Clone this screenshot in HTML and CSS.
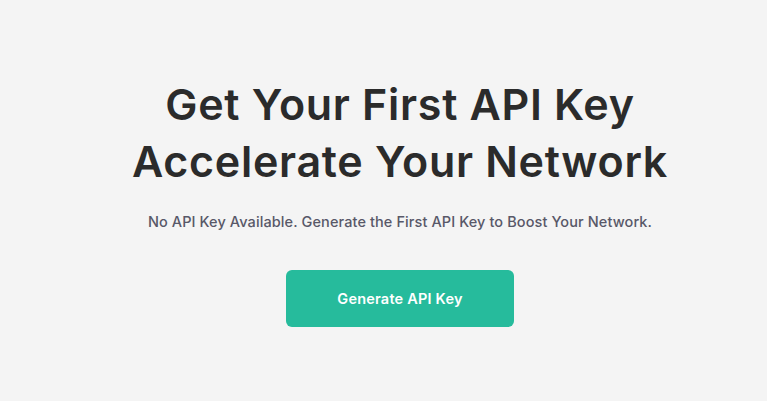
FILE: index.html
```html
<!DOCTYPE html>
<html lang="en">
<head>
<meta charset="utf-8">
<link rel="stylesheet" href="styles.css">
</head>
<body>
<main class="empty">
  <h1 class="title">Get Your First API Key<br>Accelerate Your Network</h1>
  <p class="subtitle">No API Key Available. Generate the First API Key to Boost Your Network.</p>
  <button class="cta" type="button">Generate API Key</button>
</main>
</body>
</html>
```
FILE: styles.css
```css
html, body {
  margin: 0;
  padding: 0;
  background: #f4f4f4;
}
body {
  font-family: "Inter", "Noto Sans", sans-serif;
  width: 767px;
  height: 401px;
  overflow: hidden;
}
.empty {
  width: 800px;
  display: flex;
  flex-direction: column;
  align-items: center;
  padding-top: 76px;
}
.title {
  margin: 0;
  font-size: 43px;
  font-weight: 600;
  line-height: 57px;
  text-align: center;
  color: #2b2b2b;
  letter-spacing: 0.7px;
  white-space: nowrap;
}
.subtitle {
  margin: 21px 0 0;
  font-size: 14.5px;
  line-height: 22px;
  color: #585868;
  font-weight: 500;
  letter-spacing: 0.1px;
  white-space: nowrap;
}
.cta {
  margin-top: 37px;
  width: 228px;
  height: 57px;
  border: none;
  border-radius: 6px;
  background: #26bb9c;
  color: #fff;
  font-family: inherit;
  font-size: 14.5px;
  font-weight: 600;
  letter-spacing: 0.2px;
}
```
